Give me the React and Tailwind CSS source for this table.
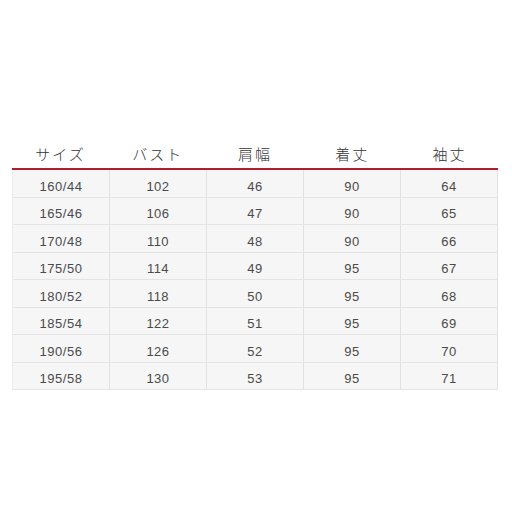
import React from "react";

const headers = ["サイズ", "バスト", "肩幅", "着丈", "袖丈"];
const rows = [
  ["160/44", "102", "46", "90", "64"],
  ["165/46", "106", "47", "90", "65"],
  ["170/48", "110", "48", "90", "66"],
  ["175/50", "114", "49", "95", "67"],
  ["180/52", "118", "50", "95", "68"],
  ["185/54", "122", "51", "95", "69"],
  ["190/56", "126", "52", "95", "70"],
  ["195/58", "130", "53", "95", "71"],
];

export default function App() {
  return (
    <div className="w-[512px] h-[512px] bg-white pt-[140px] pl-[12px]">
      <div className="w-[486px]">
        {/* ヘッダー */}
        <div
          className="grid grid-cols-5 h-[30px] border-b-2 border-[#b31b2f] text-[15px] text-[#333]"
          style={{ fontFamily: '"Noto Sans CJK JP", sans-serif' }}
        >
          {headers.map((h) => (
            <div key={h} className="flex items-center justify-center font-light tracking-[2px]">
              {h}
            </div>
          ))}
        </div>
        {/* データ行 */}
        <div
          className="border-l border-[#ececec] text-[13px] text-[#4a4a4a]"
          style={{ fontFamily: '"Liberation Sans", Arial, sans-serif' }}
        >
          {rows.map((r, i) => (
            <div key={i} className="grid grid-cols-5 h-[27.5px] bg-[#f6f6f6] border-b border-[#e4e4e4]">
              {r.map((c, j) => (
                <div
                  key={j}
                  className="flex items-center justify-center pt-[6px] border-r border-[#e2e2e2] tracking-[0.5px]"
                >
                  {c}
                </div>
              ))}
            </div>
          ))}
        </div>
      </div>
    </div>
  );
}
